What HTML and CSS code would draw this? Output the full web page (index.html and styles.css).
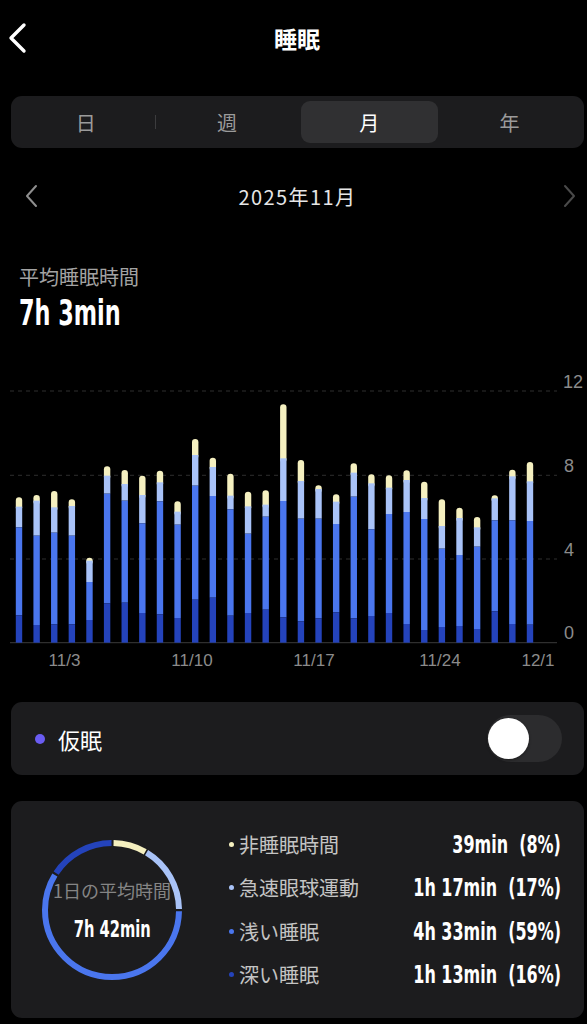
FILE: index.html
```html
<!DOCTYPE html>
<html lang="ja">
<head>
<meta charset="UTF-8">
<title>睡眠</title>
<link rel="stylesheet" href="styles.css">
</head>
<body>

<header class="topbar">
  <button class="back" aria-label="戻る">
    <svg width="22" height="32" viewBox="0 0 22 32"><polyline points="16,3 3,16 16,29" fill="none" stroke="#fff" stroke-width="3.4" stroke-linecap="round" stroke-linejoin="round"/></svg>
  </button>
  <h1 class="title">睡眠</h1>
  <span></span>
</header>

<nav class="seg">
  <span class="seg-item first">日</span>
  <span class="seg-item">週</span>
  <span class="seg-item active">月</span>
  <span class="seg-item">年</span>
</nav>

<div class="date-row">
  <svg width="14" height="24" viewBox="0 0 14 24"><polyline points="11,2 2,12 11,22" fill="none" stroke="#8e8e8e" stroke-width="2" stroke-linecap="round" stroke-linejoin="round"/></svg>
  <span class="date-label">2025年11月</span>
  <svg width="14" height="24" viewBox="0 0 14 24"><polyline points="3,2 12,12 3,22" fill="none" stroke="#4a4a4a" stroke-width="2" stroke-linecap="round" stroke-linejoin="round"/></svg>
</div>

<section class="summary">
  <div class="summary-label">平均睡眠時間</div>
  <div class="summary-value"><span class="num">7h 3min</span></div>
</section>

<svg id="chart" class="chart" width="587" height="310" viewBox="0 0 587 310">
  <g class="grid">
    <line x1="10" y1="21" x2="557" y2="21"/>
    <line x1="10" y1="105.3" x2="557" y2="105.3"/>
    <line x1="10" y1="189" x2="557" y2="189"/>
  </g>
  <line class="baseline" x1="10" y1="272.7" x2="557" y2="272.7"/>
  <g id="bars"></g>
  <g class="ylabels">
    <text x="563" y="12">12</text>
    <text x="564" y="96">8</text>
    <text x="564" y="180">4</text>
    <text x="564" y="263">0</text>
  </g>
  <g class="xlabels">
    <text x="64.5" y="290">11/3</text>
    <text x="192" y="290">11/10</text>
    <text x="314" y="290">11/17</text>
    <text x="440" y="290">11/24</text>
    <text x="538" y="290">12/1</text>
  </g>
</svg>

<div class="card nap">
  <span class="dot nap-dot"></span>
  <span class="nap-label">仮眠</span>
  <span class="toggle"><span class="knob"></span></span>
</div>

<div class="card stats">
  <div class="donut">
    <svg width="150" height="150" viewBox="0 0 150 150">
      <g transform="rotate(-90 75 75)" fill="none" stroke-width="6">
        <circle cx="75" cy="75" r="67" stroke="#f5f0c0" stroke-dasharray="33.1 421" stroke-dashoffset="-1.6"/>
        <circle cx="75" cy="75" r="67" stroke="#a9c3f8" stroke-dasharray="67.8 421" stroke-dashoffset="-36.3"/>
        <circle cx="75" cy="75" r="67" stroke="#4a76ee" stroke-dasharray="245.6 421" stroke-dashoffset="-106.4"/>
        <circle cx="75" cy="75" r="67" stroke="#2443bb" stroke-dasharray="65.5 421" stroke-dashoffset="-354.3"/>
      </g>
    </svg>
    <div class="donut-text">
      <div class="donut-label">1日の平均時間</div>
      <div class="donut-value"><span class="num">7h 42min</span></div>
    </div>
  </div>

  <ul class="legend">
    <li><span class="dot awake"></span><span class="legend-label">非睡眠時間</span><span class="legend-value"><span class="num">39min&nbsp; (8%)</span></span></li>
    <li><span class="dot rem"></span><span class="legend-label">急速眼球運動</span><span class="legend-value"><span class="num">1h 17min&nbsp; (17%)</span></span></li>
    <li><span class="dot light"></span><span class="legend-label">浅い睡眠</span><span class="legend-value"><span class="num">4h 33min&nbsp; (59%)</span></span></li>
    <li><span class="dot deep"></span><span class="legend-label">深い睡眠</span><span class="legend-value"><span class="num">1h 13min&nbsp; (16%)</span></span></li>
  </ul>
</div>

<script src="chart.js"></script>
</body>
</html>
```

FILE: styles.css
```css
body{
	margin:0;
	width:587px;
	background:#000;
	color:#fff;
	font-family:"Noto Sans CJK JP","Noto Sans",sans-serif;
}

/* numeros en letra estrecha */
.num{
	display:inline-block;
	font-family:"DejaVu Sans Condensed","DejaVu Sans","Liberation Sans",sans-serif;
	font-weight:700;
	transform:scaleX(.71);
	transform-origin:left center;
	white-space:nowrap;
}

/* cabecera */
.topbar{
	height:76px;
	display:grid;
	grid-template-columns:1fr auto 1fr;
	align-items:center;
}
.back{
	justify-self:start;
	margin-left:8px;
	padding:0;
	border:0;
	background:none;
	display:flex;
}
.title{
	margin:0 0 0 7px;
	font-size:23px;
	font-weight:700;
}

/* selector dia / semana / mes / año */
.seg{
	margin:20px 3px 0 11px;
	height:52px;
	box-sizing:border-box;
	padding:5px 4px;
	background:#1c1c1e;
	border-radius:11px;
	display:grid;
	grid-template-columns:repeat(4,1fr);
}
.seg-item{
	display:flex;
	align-items:center;
	justify-content:center;
	font-size:20px;
	color:#9b9b9b;
	border-radius:9px;
	position:relative;
}
.seg-item.first::after{
	content:"";
	position:absolute;
	right:0;
	top:14px;
	height:14px;
	width:1px;
	background:#3c3c3e;
}
.seg-item.active{
	background:#303032;
	color:#fff;
	margin:0 1px 0 3px;
}

.date-row{
	margin-top:24px;
	height:48px;
	display:flex;
	align-items:center;
	justify-content:space-between;
	padding:0 11px 0 25px;
}
.date-label{
	font-size:20px;
	letter-spacing:1.4px;
	color:#e6e6e6;
	margin-left:-6px;
}

.summary{
	margin-top:45px;
	padding-left:19px;
}
.summary-label{
	font-size:20px;
	height:24px;
	line-height:24px;
	color:#a3a3a3;
}
.summary-value{
	margin-top:6px;
	height:36px;
	display:flex;
	align-items:center;
	font-size:35px;
}

/* grafica */
.chart{
	display:block;
	margin-top:39px;
}
.grid line{
	stroke:#2e2e2e;
	stroke-width:1;
	stroke-dasharray:4 4;
}
.baseline{
	stroke:#3a3a3a;
	stroke-width:1;
}
.ylabels text,.xlabels text{
	fill:#8b8b8b;
	dominant-baseline:central;
	font-family:"Liberation Sans","Noto Sans",sans-serif;
}
.ylabels text{
	font-size:18px;
}
.xlabels text{
	font-size:17px;
	text-anchor:middle;
}

/* tarjetas */
.card{
	margin:0 3px 0 11px;
	background:#1c1c1e;
	border-radius:11px;
}
.dot{
	display:inline-block;
	border-radius:50%;
	flex:none;
}

.nap{
	margin-top:22px;
	height:73px;
	display:flex;
	align-items:center;
	padding:0 22px 0 24px;
}
.nap-dot{
	width:10px;
	height:10px;
	background:#6a5cf2;
}
.nap-label{
	margin-left:13px;
	font-size:22px;
}
.toggle{
	margin-left:auto;
	width:75px;
	height:47px;
	border-radius:24px;
	background:#2c2c2e;
	display:flex;
	align-items:center;
	padding:0 3px 0 1px;
	box-sizing:border-box;
}
.knob{
	width:41px;
	height:41px;
	border-radius:50%;
	background:#fff;
	box-shadow:0 1px 3px rgba(0,0,0,.4);
}

.stats{
	margin-top:26px;
	height:217px;
	display:flex;
	align-items:center;
	padding:0 23px 0 26px;
}
.donut{
	display:grid;
	width:150px;
	height:150px;
	flex:none;
}
.donut svg,.donut-text{
	grid-area:1/1;
}
.donut-text{
	display:flex;
	flex-direction:column;
	align-items:center;
	justify-content:center;
	padding-top:2px;
}
.donut-label{
	font-size:18px;
	color:#858585;
	white-space:nowrap;
	line-height:22px;
}
.donut-value{
	margin-top:15px;
	height:26px;
	display:flex;
	align-items:center;
	font-size:23px;
}
.donut-value .num{
	transform-origin:center;
}

.legend{
	list-style:none;
	margin:0 0 0 42px;
	padding:0;
	flex:1;
	min-width:0;
}
.legend li{
	display:flex;
	align-items:center;
	height:43.5px;
}
.legend .dot{
	width:5px;
	height:5px;
	margin-right:5px;
}
.awake{background:#f5f0c0;}
.rem{background:#a9c3f8;}
.light{background:#4a76ee;}
.deep{background:#2443bb;}
.legend-label{
	font-size:20px;
	color:#c4c4c4;
	white-space:nowrap;
}
.legend-value{
	margin-left:auto;
	width:150px;
	flex:none;
	display:flex;
	justify-content:flex-end;
	font-size:25px;
}
.legend-value .num{
	flex:none;
	transform-origin:right center;
}
```

FILE: chart.js
```js
// valores medidos: [arriba, rem, ligero, profundo] (en 1/3 px)
var barras=[
	[382,410,472,736],[375,392,497,765],[363,412,488,763],[388,408,497,763],
	[563,572,636,750],[289,317,371,700],[300,342,392,698],[317,375,460,729],
	[302,337,394,733],[394,425,464,744],[207,255,347,689],[263,291,378,683],
	[311,377,418,737],[365,409,491,729],[361,404,440,719],[103,265,393,742],
	[270,333,446,754],[346,357,446,745],[373,395,462,727],[280,308,380,745],
	[313,340,478,738],[316,353,432,729],[301,330,426,762],[335,384,447,780],
	[388,468,536,771],[413,444,555,768],[441,472,530,777],[376,385,451,724],
	[299,319,451,762],[276,334,453,764]
];
var colores=["#f5f0c0","#a9c3f8","#4a76ee","#2443bb"];
var base=818/3;
var ns="http://www.w3.org/2000/svg";
var g=document.getElementById("bars");

function rect(x,y,w,h,c,r){
	var el=document.createElementNS(ns,"rect");
	el.setAttribute("x",x);
	el.setAttribute("y",y);
	el.setAttribute("width",w);
	el.setAttribute("height",h);
	el.setAttribute("fill",c);
	if(r){el.setAttribute("rx",r);}
	g.appendChild(el);
}

for(var i=0;i<barras.length;i++){
	var w=6.4;
	var x=19+i*17.62-w/2;
	var y=barras[i].map(function(v){return v/3;});
	rect(x,y[0],w,y[1]-y[0]+4,colores[0],3.2);
	rect(x,y[1],w,y[2]-y[1],colores[1]);
	rect(x,y[2],w,y[3]-y[2],colores[2]);
	rect(x,y[3],w,base-y[3],colores[3]);
}
```
